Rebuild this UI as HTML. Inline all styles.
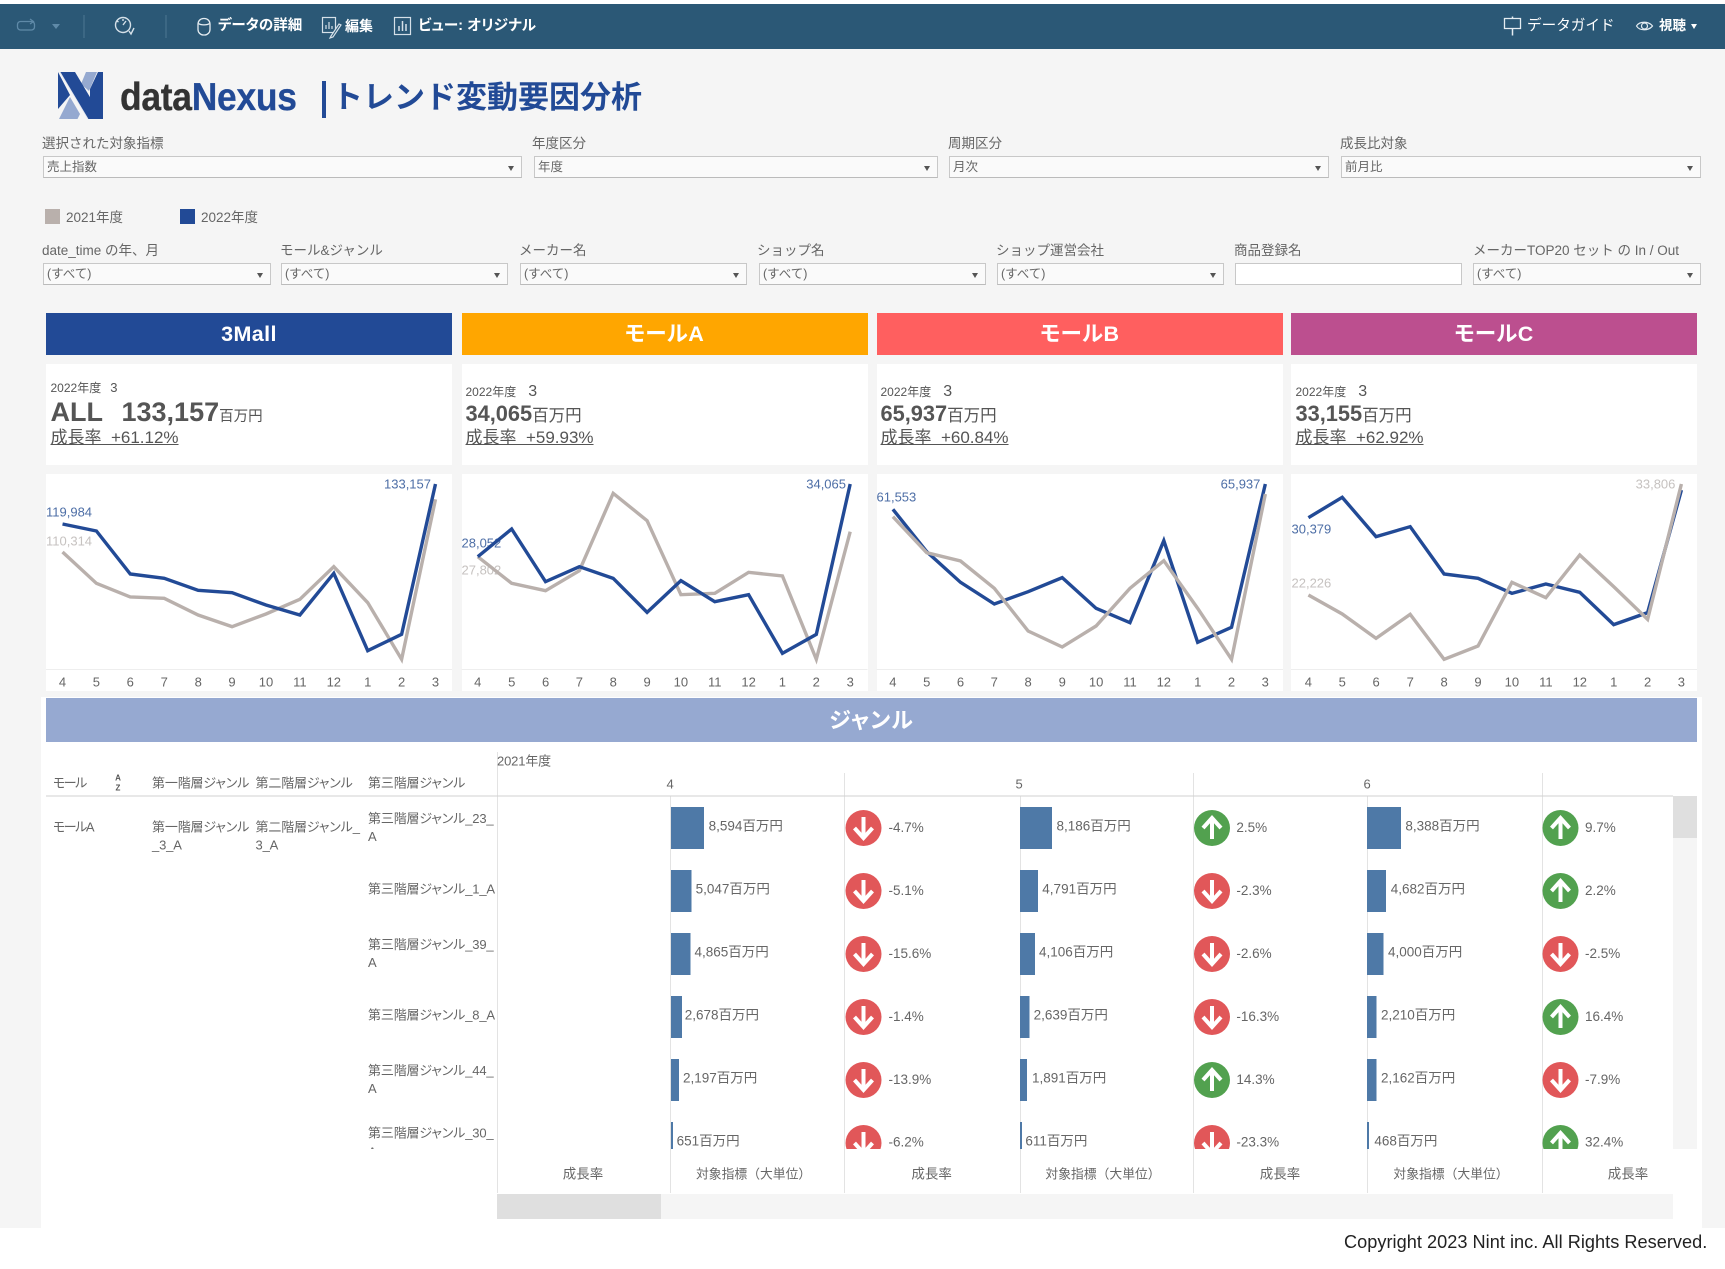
<!DOCTYPE html>
<html lang="ja"><head><meta charset="utf-8"><title>トレンド変動要因分析</title>
<style>
html,body{margin:0;padding:0;background:#fff}
body{width:1725px;height:1269px;position:relative;overflow:hidden;font-family:"Liberation Sans","Noto Sans CJK JP",sans-serif;color:#666}
div{position:absolute;box-sizing:border-box;white-space:nowrap}
.bg{left:0;top:49px;width:1725px;height:1179px;background:#f5f5f5}
.wh{left:41px;top:697px;width:1661px;height:531px;background:#fff}
.tb{left:0;top:4px;width:1725px;height:45px;background:#2b5876}
.tt{color:#fff;font-weight:700;font-size:14px;top:26px;line-height:0;height:0;font-feature-settings:"palt"}
.lab{font-size:13.5px;color:#666;line-height:16px;height:16px}
.sel{background:#fafafa;border:1px solid #c8c8c8;border-bottom-color:#bbb;font-size:12.5px;color:#666;padding-left:3px;line-height:20px}
.sel:after{content:"";position:absolute;right:7px;top:9px;border-left:3px solid transparent;border-right:3px solid transparent;border-top:5px solid #555}
.hd{top:313px;height:42px;line-height:42px;text-align:center;color:#fff;font-weight:700;font-size:21.5px;font-feature-settings:"palt";letter-spacing:.4px}
.kp{top:364px;height:101px;background:#fff}
.ch{top:474px;height:217px;background:#fff}
.kt{color:#555;line-height:20px;height:20px;font-feature-settings:"palt"}
svg text{font-family:"Liberation Sans","Noto Sans CJK JP",sans-serif;dominant-baseline:central}
.t{font-size:13px;fill:#666;font-feature-settings:"palt";letter-spacing:-.15px}
.n{font-size:13px;fill:#666;font-feature-settings:"palt";letter-spacing:-1.5px}
.f{font-size:12.800px;fill:#666}
.v{font-size:13.500px;fill:#666;font-feature-settings:"palt"}
.ax{font-size:13px;fill:#666;text-anchor:middle}
.b{font-size:13px;fill:#4d6ea6}
.g{font-size:13px;fill:#c6c2c0}
.lb{fill:none;stroke:#224a96;stroke-width:3.400;vector-effect:non-scaling-stroke}
.lg{fill:none;stroke:#b9b0ac;stroke-width:3.400;vector-effect:non-scaling-stroke}
.m{text-anchor:middle}
</style></head><body>
<div class="bg"></div>
<div class="wh"></div>
<div class="tb"></div>
<svg style="position:absolute;left:0;top:0" width="420" height="49" fill="none">
<rect x="17.500" y="21.500" width="17" height="8.500" rx="3" stroke="#5f8aa8" stroke-width="1.300"/>
<path d="M30 19l3.500 2.500-3.500 2.500" stroke="#5f8aa8" stroke-width="1.200"/>
<path d="M52 24h8l-4 5z" fill="#5f8aa8"/>
<path d="M84 15v23M166 15v23" stroke="#46708c" stroke-width="1.300"/>
<circle cx="123" cy="25" r="7.500" stroke="#d5e0e8" stroke-width="1.400"/>
<path d="M123 25l3-4M117 21l1.500 1M123 19v2M129 31l2 3 3-6" stroke="#d5e0e8" stroke-width="1.400"/>
<rect x="198" y="18.500" width="12" height="16.500" rx="5.500" stroke="#e4ecf1" stroke-width="1.300"/>
<path d="M198.500 23.500c2 1.800 9 1.800 11 0" stroke="#e4ecf1" stroke-width="1.300"/>
<rect x="322.500" y="17.500" width="13" height="15" stroke="#d5e0e8" stroke-width="1.200"/>
<path d="M326 29v-4M329 29v-7M332 29v-3M331 36l8-12 2 1-8 12-3 1z" stroke="#d5e0e8" stroke-width="1.200" fill="#2b5876"/>
<rect x="394.500" y="17.500" width="16" height="17" stroke="#d5e0e8" stroke-width="1.200"/>
<path d="M399 31v-5M402.500 31v-10M406 31v-7" stroke="#d5e0e8" stroke-width="1.500"/>
</svg>
<div class="tt" style="left:218px;font-size:14.500px">データの詳細</div>
<div class="tt" style="left:345px">編集</div>
<div class="tt" style="left:418px;font-size:14.700px">ビュー: オリジナル</div>
<svg style="position:absolute;left:1500px;top:10px" width="170" height="30" fill="none">
<path d="M4.500 8.500h16v10h-16z" stroke="#e4ecf1" stroke-width="1.300"/>
<path d="M12.500 6.500v2M12.500 18.500v7" stroke="#e4ecf1" stroke-width="1.500"/>
<path d="M136.500 16c3-5 12-5 16 0-4 5-13 5-16 0z" stroke="#e4ecf1" stroke-width="1.200"/>
<circle cx="144.500" cy="16" r="3" stroke="#e4ecf1" stroke-width="1.200"/>
</svg>
<div class="tt" style="left:1527px;font-weight:400;font-size:14.600px;font-feature-settings:normal">データガイド</div>
<div class="tt" style="left:1659px;font-size:13.500px">視聴</div>
<div style="left:1691px;top:24px;border-left:3.500px solid transparent;border-right:3.500px solid transparent;border-top:5px solid #fff"></div>

<svg style="position:absolute;left:58px;top:72px" width="45" height="47">
<path d="M1 47L12 25 22 42 19.500 47z" fill="#95a9d0"/>
<path d="M23 12L28 0H39L31 19z" fill="#95a9d0"/>
<path d="M0 0V37L12 23z" fill="#224a96"/>
<path d="M45 0V47H43.500L32 28V17L40 0z" fill="#224a96"/>
<path d="M2 0H17L45 47H30z" fill="#224a96"/>
<path d="M2 0L30 47" stroke="#dfe5f0" stroke-width=".8"/>
</svg>
<div style="left:119.500px;top:74px;font-size:38.500px;font-weight:700;letter-spacing:-.3px;line-height:48px;color:#333;transform:scaleX(.92);transform-origin:0 0;-webkit-text-stroke:.3px currentColor">data<span style="color:#224a96">Nexus</span></div>
<div style="left:322px;top:81px;width:4px;height:37px;background:#224a96"></div>
<div style="left:332px;top:75px;font-size:31px;font-weight:700;line-height:46px;color:#224a96">トレンド変動要因分析</div>

<div class="lab" style="left:42px;top:136px">選択された対象指標</div>
<div class="lab" style="left:532px;top:136px">年度区分</div>
<div class="lab" style="left:948px;top:136px">周期区分</div>
<div class="lab" style="left:1340px;top:136px">成長比対象</div>
<div class="sel" style="left:43px;top:156px;width:479px;height:22px">売上指数</div>
<div class="sel" style="left:534px;top:156px;width:404px;height:22px">年度</div>
<div class="sel" style="left:949px;top:156px;width:380px;height:22px">月次</div>
<div class="sel" style="left:1341px;top:156px;width:360px;height:22px">前月比</div>

<div style="left:45px;top:209px;width:15px;height:15px;background:#b9b0ac"></div>
<div class="lab" style="left:66px;top:210px">2021年度</div>
<div style="left:180px;top:209px;width:15px;height:15px;background:#224a96"></div>
<div class="lab" style="left:201px;top:210px">2022年度</div>

<div class="lab" style="left:42px;top:243px">date_time の年、月</div>
<div class="lab" style="left:280px;top:243px">モール&amp;ジャンル</div>
<div class="lab" style="left:519px;top:243px">メーカー名</div>
<div class="lab" style="left:757px;top:243px">ショップ名</div>
<div class="lab" style="left:996px;top:243px">ショップ運営会社</div>
<div class="lab" style="left:1234px;top:243px">商品登録名</div>
<div class="lab" style="left:1473px;top:243px">メーカーTOP20 セット の In / Out</div>
<div class="sel" style="left:43px;top:263px;width:228px;height:22px">(すべて)</div>
<div class="sel" style="left:281px;top:263px;width:227px;height:22px">(すべて)</div>
<div class="sel" style="left:520px;top:263px;width:227px;height:22px">(すべて)</div>
<div class="sel" style="left:759px;top:263px;width:227px;height:22px">(すべて)</div>
<div class="sel" style="left:997px;top:263px;width:227px;height:22px">(すべて)</div>
<div style="left:1235px;top:263px;width:227px;height:22px;background:#fff;border:1px solid #c8c8c8"></div>
<div class="sel" style="left:1473px;top:263px;width:228px;height:22px">(すべて)</div>

<div class="hd" style="left:46px;width:406px;background:#224a96">3Mall</div>
<div class="hd" style="left:461.500px;width:406px;background:#ffa600">モールA</div>
<div class="hd" style="left:876.500px;width:406.500px;background:#ff5f5f">モールB</div>
<div class="hd" style="left:1291px;width:406px;background:#bc4f8f">モールC</div>

<div class="kp" style="left:46px;width:406px"></div>
<div class="kp" style="left:461.500px;width:406px"></div>
<div class="kp" style="left:876.500px;width:406.500px"></div>
<div class="kp" style="left:1291px;width:406px"></div>

<div class="kt" style="left:50.500px;top:378px;font-size:12px">2022年度<span style="margin-left:9px;font-size:13px">3</span></div>
<div class="kt" style="left:50.500px;top:400px;font-size:27px;font-weight:700;line-height:24px;height:24px">ALL<span style="position:absolute;left:71px;top:0">133,157<span style="font-size:14.500px;font-weight:400">百万円</span></span></div>
<div class="kt" style="left:50.500px;top:428px;font-size:17px;text-decoration:underline">成長率&nbsp; +61.12%</div>

<div class="kt" style="left:465.500px;top:382px;font-size:12px">2022年度<span style="margin-left:12px;font-size:16px">3</span></div>
<div class="kt" style="left:465.500px;top:404px;font-size:21.800px;font-weight:700">34,065<span style="font-size:16.500px;font-weight:400">百万円</span></div>
<div class="kt" style="left:465.500px;top:428px;font-size:17px;text-decoration:underline">成長率&nbsp; +59.93%</div>

<div class="kt" style="left:880.500px;top:382px;font-size:12px">2022年度<span style="margin-left:12px;font-size:16px">3</span></div>
<div class="kt" style="left:880.500px;top:404px;font-size:21.800px;font-weight:700">65,937<span style="font-size:16.500px;font-weight:400">百万円</span></div>
<div class="kt" style="left:880.500px;top:428px;font-size:17px;text-decoration:underline">成長率&nbsp; +60.84%</div>

<div class="kt" style="left:1295.500px;top:382px;font-size:12px">2022年度<span style="margin-left:12px;font-size:16px">3</span></div>
<div class="kt" style="left:1295.500px;top:404px;font-size:21.800px;font-weight:700">33,155<span style="font-size:16.500px;font-weight:400">百万円</span></div>
<div class="kt" style="left:1295.500px;top:428px;font-size:17px;text-decoration:underline">成長率&nbsp; +62.92%</div>

<div class="ch" style="left:46px;width:406px"></div>
<div class="ch" style="left:461.500px;width:406px"></div>
<div class="ch" style="left:876.500px;width:406.500px"></div>
<div class="ch" style="left:1291px;width:406px"></div>

<div style="left:46px;top:698px;width:1651px;height:44px;background:#96a9d1;color:#fff;font-size:22px;font-weight:700;text-align:center;line-height:46px;font-feature-settings:'palt';letter-spacing:1px">ジャンル</div>

<svg style="position:absolute;left:0;top:0" width="1725" height="1269">
<defs>
<g id="dn"><circle r="18" fill="#e15759"/><path d="M0-11V10M-9 0l9 10 9-10" fill="none" stroke="#fff" stroke-width="4"/></g>
<g id="up"><circle r="18" fill="#52a14f"/><path d="M0 11V-10M-9 0l9-10 9 10" fill="none" stroke="#fff" stroke-width="4"/></g>
<clipPath id="c"><rect x="497" y="796" width="1176" height="353"/></clipPath>
</defs>
<path d="M46 669.500h406M461.500 669.500h406M876.500 669.500h406.500M1291 669.500h406" stroke="#eee"/>
<g>
<text class="b" x="431" y="484" text-anchor="end">133,157</text><text class="b" x="46" y="512">119,984</text><text class="g" x="46" y="541">110,314</text>
<text class="b" x="846" y="484" text-anchor="end">34,065</text><text class="b" x="461.500" y="543">28,052</text><text class="g" x="461.500" y="570">27,802</text>
<text class="b" x="1260.400" y="484" text-anchor="end">65,937</text><text class="b" x="876.500" y="497">61,553</text>
<text class="g" x="1675.400" y="484" text-anchor="end">33,806</text><text class="b" x="1291.500" y="529">30,379</text><text class="g" x="1291.500" y="583">22,226</text>
</g>
<g transform="translate(30,300) scale(.5421,.33333)">
<polyline class="lg" points="60,756 122.500,850 185,891 247.600,895 310.200,945 372.700,980 435.300,942 497.800,898 560.400,800 623,908 685.500,1078 748,598"/>
<polyline class="lb" points="60,672 122.500,693 185,822 247.600,835 310.200,871 372.700,878 435.300,915 497.800,945 560.400,820 623,1052 685.500,1003 748,552"/>
<polyline class="lg" points="826,770 888.500,850 951,872 1013.400,812 1075.800,580 1138.300,662 1200.700,884 1263.200,880 1325.600,817 1388,828 1450.500,1078 1513,695"/>
<polyline class="lb" points="826,770 888.500,687 951,845 1013.400,800 1075.800,835 1138.300,937 1200.700,842 1263.200,905 1325.600,884 1388,1060 1450.500,1003 1513,552"/>
</g>
<g transform="translate(870,300) scale(.5453,.33333)">
<polyline class="lb" points="42,628 104,755 166,847 228,912 290,875 352.500,833 414.600,925 476.700,968 538.800,722 600.900,1027 663,982 725,552"/>
<polyline class="lg" points="42,650 104,758 166,783 228,865 290,993 352.500,1041 414.600,978 476.700,865 538.800,782 600.900,925 663,1078 725,582"/>
<polyline class="lb" points="804,653 866,592 928,710 990.600,680 1052.800,822 1115,835 1177.200,880 1239.400,852 1301.600,877 1363.800,974 1426,938 1488,570"/>
<polyline class="lg" points="804,885 866,942 928,1015 990.600,943 1052.800,1078 1115,1038 1177.200,847 1239.400,893 1301.600,765 1363.800,860 1426,958 1488,552"/>
</g>
<g>
<text class="ax" x="62.500" y="682">4</text><text class="ax" x="96.400" y="682">5</text><text class="ax" x="130.300" y="682">6</text><text class="ax" x="164.200" y="682">7</text><text class="ax" x="198.200" y="682">8</text><text class="ax" x="232" y="682">9</text><text class="ax" x="266" y="682">10</text><text class="ax" x="299.900" y="682">11</text><text class="ax" x="333.800" y="682">12</text><text class="ax" x="367.700" y="682">1</text><text class="ax" x="401.600" y="682">2</text><text class="ax" x="435.500" y="682">3</text>
<text class="ax" x="477.800" y="682">4</text><text class="ax" x="511.700" y="682">5</text><text class="ax" x="545.600" y="682">6</text><text class="ax" x="579.400" y="682">7</text><text class="ax" x="613.200" y="682">8</text><text class="ax" x="647.100" y="682">9</text><text class="ax" x="680.900" y="682">10</text><text class="ax" x="714.800" y="682">11</text><text class="ax" x="748.600" y="682">12</text><text class="ax" x="782.400" y="682">1</text><text class="ax" x="816.300" y="682">2</text><text class="ax" x="850.200" y="682">3</text>
<text class="ax" x="892.900" y="682">4</text><text class="ax" x="926.700" y="682">5</text><text class="ax" x="960.500" y="682">6</text><text class="ax" x="994.300" y="682">7</text><text class="ax" x="1028.100" y="682">8</text><text class="ax" x="1062.200" y="682">9</text><text class="ax" x="1096.100" y="682">10</text><text class="ax" x="1130" y="682">11</text><text class="ax" x="1163.800" y="682">12</text><text class="ax" x="1197.700" y="682">1</text><text class="ax" x="1231.500" y="682">2</text><text class="ax" x="1265.300" y="682">3</text>
<text class="ax" x="1308.400" y="682">4</text><text class="ax" x="1342.200" y="682">5</text><text class="ax" x="1376.100" y="682">6</text><text class="ax" x="1410.200" y="682">7</text><text class="ax" x="1444.100" y="682">8</text><text class="ax" x="1478" y="682">9</text><text class="ax" x="1511.900" y="682">10</text><text class="ax" x="1545.900" y="682">11</text><text class="ax" x="1579.800" y="682">12</text><text class="ax" x="1613.700" y="682">1</text><text class="ax" x="1647.600" y="682">2</text><text class="ax" x="1681.400" y="682">3</text>
</g>
<rect x="1673" y="796" width="24" height="353" fill="#f5f5f5"/>
<rect x="1673" y="796" width="24" height="42" fill="#dfdfdf"/>
<rect x="497" y="1194" width="1176" height="25" fill="#f5f5f5"/>
<rect x="497" y="1194" width="164" height="25" fill="#dfdfdf"/>
<path d="M497.500 752V1193M670.500 796V1193M844.500 773V1193M1020.500 796V1193M1193.500 773V1193M1367.500 796V1193M1542.500 773V1193" stroke="#e3e3e3"/>
<path d="M46 796h1627" stroke="#d0d0d0"/>
<text class="n" x="53" y="783">モール</text>
<text x="118" y="778" font-size="8" fill="#555" text-anchor="middle" font-weight="700">A</text>
<text x="118" y="788" font-size="8" fill="#555" text-anchor="middle" font-weight="700">Z</text>
<text class="t" x="152" y="783">第一階層ジャンル</text>
<text class="t" x="255.500" y="783">第二階層ジャンル</text>
<text class="t" x="368" y="783">第三階層ジャンル</text>
<text class="t" x="497" y="761">2021年度</text>
<text class="t m" x="670" y="784">4</text><text class="t m" x="1019" y="784">5</text><text class="t m" x="1367" y="784">6</text>
<text class="n" x="53" y="827">モールA</text>
<text class="t" x="152" y="827">第一階層ジャンル</text><text class="t" x="152" y="845">_3_A</text>
<text class="t" x="255.500" y="827">第二階層ジャンル_</text><text class="t" x="255.500" y="845">3_A</text>
<text class="t" x="368" y="818.500">第三階層ジャンル_23_</text><text class="t" x="368" y="836.500">A</text>
<text class="t" x="368" y="889">第三階層ジャンル_1_A</text>
<text class="t" x="368" y="944.500">第三階層ジャンル_39_</text><text class="t" x="368" y="962.500">A</text>
<text class="t" x="368" y="1015">第三階層ジャンル_8_A</text>
<text class="t" x="368" y="1070.500">第三階層ジャンル_44_</text><text class="t" x="368" y="1088.500">A</text>
<text class="t" x="368" y="1133">第三階層ジャンル_30_</text><text class="t" x="368" y="1152">A</text>
<g clip-path="url(#c)">
<g fill="#4e79a7">
<rect x="671" y="807" width="33" height="42"/><rect x="671" y="870" width="20.500" height="42"/><rect x="671" y="933" width="19.500" height="42"/><rect x="671" y="996" width="11" height="42"/><rect x="671" y="1059" width="8" height="42"/><rect x="671" y="1122" width="2" height="27"/>
<rect x="1020" y="807" width="32" height="42"/><rect x="1020" y="870" width="18" height="42"/><rect x="1020" y="933" width="15" height="42"/><rect x="1020" y="996" width="9.500" height="42"/><rect x="1020" y="1059" width="7" height="42"/><rect x="1020" y="1122" width="2" height="27"/>
<rect x="1367" y="807" width="34" height="42"/><rect x="1367" y="870" width="19" height="42"/><rect x="1367" y="933" width="16.500" height="42"/><rect x="1367" y="996" width="9.500" height="42"/><rect x="1367" y="1059" width="9.500" height="42"/><rect x="1367" y="1122" width="2" height="27"/>
</g>
<use href="#dn" x="863.500" y="828"/><use href="#dn" x="863.500" y="891"/><use href="#dn" x="863.500" y="954"/><use href="#dn" x="863.500" y="1017"/><use href="#dn" x="863.500" y="1080"/><use href="#dn" x="863.500" y="1143"/>
<use href="#up" x="1212" y="828"/><use href="#dn" x="1212" y="891"/><use href="#dn" x="1212" y="954"/><use href="#dn" x="1212" y="1017"/><use href="#up" x="1212" y="1080"/><use href="#dn" x="1212" y="1143"/>
<use href="#up" x="1560.500" y="828"/><use href="#up" x="1560.500" y="891"/><use href="#dn" x="1560.500" y="954"/><use href="#up" x="1560.500" y="1017"/><use href="#dn" x="1560.500" y="1080"/><use href="#up" x="1560.500" y="1143"/>
<text class="v" x="708.600" y="826">8,594百万円</text><text class="v" x="695.600" y="889">5,047百万円</text><text class="v" x="694.500" y="952">4,865百万円</text><text class="v" x="684.700" y="1015">2,678百万円</text><text class="v" x="683" y="1078">2,197百万円</text><text class="v" x="676.600" y="1141">651百万円</text>
<text class="v" x="1056.500" y="826">8,186百万円</text><text class="v" x="1042.300" y="889">4,791百万円</text><text class="v" x="1039" y="952">4,106百万円</text><text class="v" x="1033.600" y="1015">2,639百万円</text><text class="v" x="1032" y="1078">1,891百万円</text><text class="v" x="1025.400" y="1141">611百万円</text>
<text class="v" x="1405.400" y="826">8,388百万円</text><text class="v" x="1390.700" y="889">4,682百万円</text><text class="v" x="1388" y="952">4,000百万円</text><text class="v" x="1381" y="1015">2,210百万円</text><text class="v" x="1381" y="1078">2,162百万円</text><text class="v" x="1374.400" y="1141">468百万円</text>
<text class="v" x="888.500" y="827.500">-4.7%</text><text class="v" x="888.500" y="890.500">-5.1%</text><text class="v" x="888.500" y="953.500">-15.6%</text><text class="v" x="888.500" y="1016.500">-1.4%</text><text class="v" x="888.500" y="1079.500">-13.9%</text><text class="v" x="888.500" y="1142">-6.2%</text>
<text class="v" x="1236.400" y="827.500">2.5%</text><text class="v" x="1236.400" y="890.500">-2.3%</text><text class="v" x="1236.400" y="953.500">-2.6%</text><text class="v" x="1236.400" y="1016.500">-16.3%</text><text class="v" x="1236.400" y="1079.500">14.3%</text><text class="v" x="1236.400" y="1142">-23.3%</text>
<text class="v" x="1585" y="827.500">9.7%</text><text class="v" x="1585" y="890.500">2.2%</text><text class="v" x="1585" y="953.500">-2.5%</text><text class="v" x="1585" y="1016.500">16.4%</text><text class="v" x="1585" y="1079.500">-7.9%</text><text class="v" x="1585" y="1142">32.4%</text>
</g>
<rect x="360" y="1149" width="137" height="45" fill="#fff"/>
<text class="v m" x="583" y="1174">成長率</text><text class="f m" x="753.600" y="1174">対象指標（大単位）</text><text class="v m" x="931.600" y="1174">成長率</text><text class="f m" x="1103" y="1174">対象指標（大単位）</text><text class="v m" x="1280" y="1174">成長率</text><text class="f m" x="1451" y="1174">対象指標（大単位）</text><text class="v m" x="1628" y="1174">成長率</text>
</svg>
<div style="left:1344px;top:1230px;font-size:18.150px;letter-spacing:.03px;line-height:24px;color:#222">Copyright 2023 Nint inc. All Rights Reserved.</div>
</body></html>
